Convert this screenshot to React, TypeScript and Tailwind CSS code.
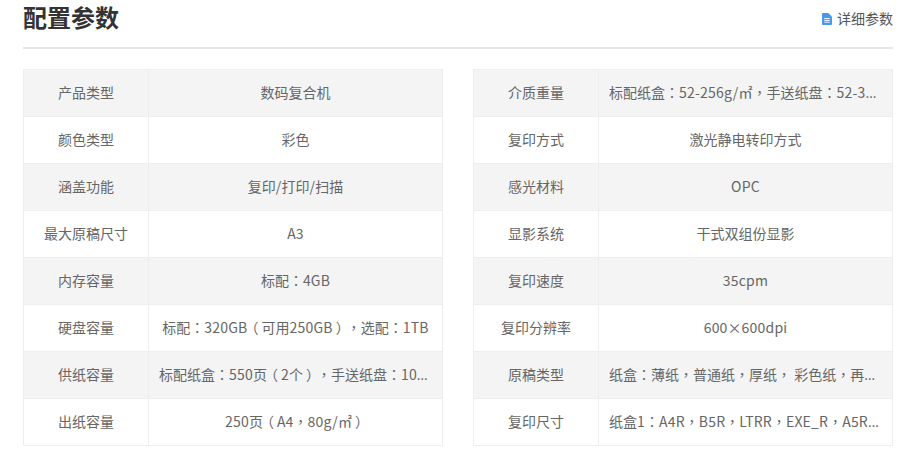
import React from 'react';

const leftRows = [
  ['产品类型', '数码复合机'],
  ['颜色类型', '彩色'],
  ['涵盖功能', '复印/打印/扫描'],
  ['最大原稿尺寸', 'A3'],
  ['内存容量', '标配：4GB'],
  ['硬盘容量', '标配：320GB（可用250GB），选配：1TB'],
  ['供纸容量', '标配纸盒：550页（2个），手送纸盘：100页'],
  ['出纸容量', '250页（A4，80g/㎡）'],
];

const rightRows = [
  ['介质重量', '标配纸盒：52-256g/㎡，手送纸盘：52-300g/㎡'],
  ['复印方式', '激光静电转印方式'],
  ['感光材料', 'OPC'],
  ['显影系统', '干式双组份显影'],
  ['复印速度', '35cpm'],
  ['复印分辨率', '600×600dpi'],
  ['原稿类型', '纸盒：薄纸，普通纸，厚纸， 彩色纸，再生纸，信封'],
  ['复印尺寸', '纸盒1：A4R，B5R，LTRR，EXE_R，A5R，B6R'],
];

// punctuation sits in the middle of its cell in the reference, latin runs are a touch wider
const Value: React.FC<{ text: string }> = ({ text }) => (
  <span className="font-['Noto_Sans_CJK_SC',sans-serif] [text-spacing-trim:space-all]">
    {text.split(/([：，（）]|[A-Za-z0-9_\-/]+)/).map((part, i) => {
      if (i % 2 === 0) return part;
      if (part === '（' || part === '）') {
        return (
          <span key={i} className="inline-block w-[14px] text-center [font-feature-settings:'palt']">{part}</span>
        );
      }
      if (part === '：' || part === '，') {
        return (
          <span key={i} className="font-['Noto_Sans_CJK_TC',sans-serif]">{part}</span>
        );
      }
      return (
        <span key={i} className="tracking-[0.2px]">{part}</span>
      );
    })}
  </span>
);

const SpecTable: React.FC<{ rows: string[][] }> = ({ rows }) => {
  return (
    <div className="w-[420px] border-t border-l border-[#eeeeee]">
      {rows.map(([label, value], i) => (
        <div key={label} className={`flex h-[47px] border-b border-r border-[#eeeeee] ${i % 2 === 0 ? 'bg-[#f4f4f4]' : 'bg-white'}`}>
          <div className="flex w-[125px] shrink-0 items-center justify-center border-r border-[#eeeeee] pb-[2px]">{label}</div>
          <div className="min-w-0 flex-1 truncate px-[10px] text-center font-['Open_Sans',sans-serif] leading-[44px]">
            <Value text={value} />
          </div>
        </div>
      ))}
    </div>
  );
};

const App: React.FC = () => {
  return (
    <div className="h-[450px] w-[902px] overflow-hidden bg-white px-[23px] pr-[9px] font-['Noto_Sans_CJK_SC',sans-serif] text-[14px] text-[#666666]">
      <div className="flex h-[49px] items-start justify-between border-b-2 border-[#e6e6e6]">
        <h1 className="text-[24px] leading-[34px] font-bold text-[#333333]">配置参数</h1>
        <a className="mt-[9px] flex items-center gap-[5px] text-[14px] leading-[18px] text-[#555555]">
          <svg width="10" height="12" viewBox="0 0 11 13" className="mt-[1px] shrink-0">
            <path d="M0 1a1 1 0 0 1 1-1h6l4 4v8a1 1 0 0 1-1 1H1a1 1 0 0 1-1-1z" fill="#4a98e8" />
            <path d="M2.5 6h6M2.5 8h6M2.5 10h6" stroke="#fff" strokeWidth="1" />
          </svg>
          详细参数
        </a>
      </div>
      <div className="mt-[20px] flex justify-between">
        <SpecTable rows={leftRows} />
        <SpecTable rows={rightRows} />
      </div>
    </div>
  );
};

export default App;
